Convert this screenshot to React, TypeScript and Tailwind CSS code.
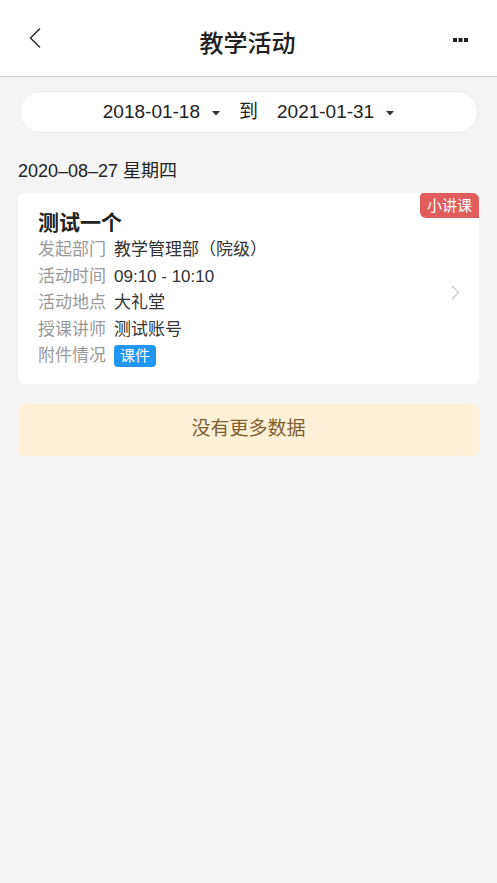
import React from 'react';

const font = { fontFamily: '"Liberation Sans", "Noto Sans CJK SC", sans-serif' };

const rows = [
  { label: '发起部门', value: '教学管理部（院级）' },
  { label: '活动时间', value: '09:10 - 10:10' },
  { label: '活动地点', value: '大礼堂' },
  { label: '授课讲师', value: '测试账号' },
];

const Caret = () => (
  <svg width="8" height="5" viewBox="0 0 8 5" className="ml-3 mt-0.5">
    <path d="M0 0 H8 L4 4.5 Z" fill="#333" />
  </svg>
);

export default function App() {
  return (
    <div className="min-h-[883px] w-full bg-[#f4f4f4] text-[#333]" style={font}>
      {/* Nav bar */}
      <div className="flex h-[77px] items-center justify-between border-b border-[#cfcfcf] bg-white px-7 pt-3">
        <svg width="14" height="22" viewBox="0 0 14 22" className="-mt-3">
          <path d="M12 1.5 L2.5 11 L12 20.5" fill="none" stroke="#333" strokeWidth="1.6" />
        </svg>
        <h1 className="text-[24px] font-medium text-[#222]">教学活动</h1>
        <svg width="16" height="5" viewBox="0 0 16 5" className="-mt-2">
          <rect x="0" y="0" width="4" height="4" fill="#222" />
          <rect x="5.5" y="0" width="4" height="4" fill="#222" />
          <rect x="11" y="0" width="4" height="4" fill="#222" />
        </svg>
      </div>

      <div className="px-[18px] pt-[14px]">
        {/* Date range */}
        <div className="mx-px flex h-[42px] items-center justify-center rounded-full border border-[#ececec] bg-white text-[19px] text-[#222]">
          <span>2018-01-18</span>
          <Caret />
          <span className="mx-[19px]">到</span>
          <span>2021-01-31</span>
          <Caret />
        </div>

        <div className="mt-[29px] text-[18px] leading-none text-[#222]">2020–08–27 星期四</div>

        {/* Activity card */}
        <div className="relative mt-[13px] flex items-center rounded-md bg-white pb-[14px] pl-[20px] pr-[18px] pt-[15px]">
          <span className="absolute right-0 top-0 rounded-tr-md rounded-bl-md rounded-tl-sm bg-[#e05d5d] px-[7px] py-[2px] text-[15px] leading-[21px] text-white">
            小讲课
          </span>
          <div className="flex-1">
            <div className="text-[21px] font-semibold leading-[29px] text-[#222]">测试一个</div>
            {rows.map((r) => (
              <div key={r.label} className="flex text-[17px] leading-[26.5px]">
                <span className="w-[76px] text-[#999]">{r.label}</span>
                <span className="text-[#333]">{r.value}</span>
              </div>
            ))}
            <div className="flex items-center text-[17px] leading-[26.5px]">
              <span className="w-[76px] text-[#999]">附件情况</span>
              <span className="rounded-sm bg-[#2196f3] px-[6px] text-[15px] leading-[22px] text-white">课件</span>
            </div>
          </div>
          <svg width="9" height="15" viewBox="0 0 9 15" className="mr-[1px] mt-2">
            <path d="M1 1 L7.5 7.5 L1 14" fill="none" stroke="#c8c8c8" strokeWidth="1.2" />
          </svg>
        </div>

        {/* No more data */}
        <div className="mt-[20px] flex h-[52px] items-center justify-center rounded-md bg-[#fef0d7] text-[19px] text-[#7f5f30]">
          没有更多数据
        </div>
      </div>
    </div>
  );
}
